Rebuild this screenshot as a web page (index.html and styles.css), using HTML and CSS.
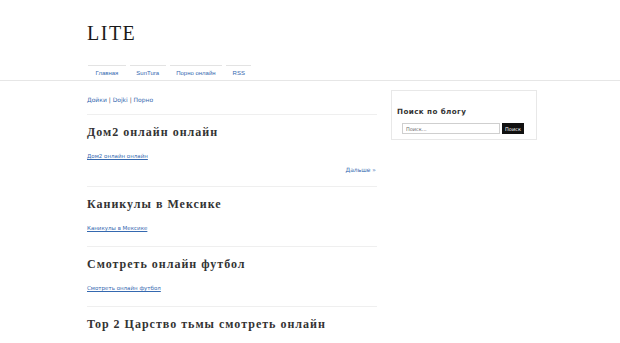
FILE: index.html
```html
<!DOCTYPE html>
<html lang="ru">
<head>
<meta charset="utf-8">
<title>LITE</title>
<link rel="stylesheet" href="styles.css">
</head>
<body>
<header class="site-header">
  <div class="wrap">
    <div class="logo">LITE</div>
    <nav class="nav">
      <a class="tab" href="#">Главная</a>
      <a class="tab" href="#">SunTura</a>
      <a class="tab" href="#">Порно онлайн</a>
      <a class="tab" href="#">RSS</a>
    </nav>
  </div>
</header>
<div class="wrap layout">
  <main class="main">
    <div class="crumbs"><a href="#">Дойки</a> | <a href="#">Dojki</a> | <a href="#">Порно</a></div>
    <article class="post post-more">
      <h2 class="post-title">Дом2 онлайн онлайн</h2>
      <p class="post-link"><a href="#">Дом2 онлайн онлайн</a></p>
      <div class="more"><a href="#">Дальше »</a></div>
    </article>
    <article class="post">
      <h2 class="post-title">Каникулы в Мексике</h2>
      <p class="post-link"><a href="#">Каникулы в Мексике</a></p>
    </article>
    <article class="post">
      <h2 class="post-title">Смотреть онлайн футбол</h2>
      <p class="post-link"><a href="#">Смотреть онлайн футбол</a></p>
    </article>
    <article class="post">
      <h2 class="post-title">Top 2 Царство тьмы смотреть онлайн</h2>
    </article>
  </main>
  <aside class="sidebar">
    <div class="widget">
      <h3 class="widget-title">Поиск по блогу</h3>
      <form class="search">
        <input class="search-input" type="text" placeholder="Поиск...">
        <button class="search-btn" type="button">Поиск</button>
      </form>
    </div>
  </aside>
</div>
</body>
</html>
```
FILE: styles.css
```css
* { box-sizing: border-box; }
html, body { margin: 0; padding: 0; background: #fff; }
body { font-family: "DejaVu Sans", Verdana, sans-serif; color: #333; }
a { color: #3569b0; text-decoration: none; }

.wrap { width: 450px; margin-left: 87px; }

.site-header { border-bottom: 1px solid #e6e6e6; }
.logo {
  font-family: "Liberation Serif", serif;
  font-size: 20px;
  letter-spacing: 1.5px;
  color: #1a1a1a;
  line-height: 20px;
  padding-top: 23px;
  height: 65px;
}
.nav { display: flex; gap: 4px; padding-left: 1px; }
.tab {
  display: block;
  border-top: 1px solid #e3e3e3;
  padding: 0 6.5px;
  height: 15px;
  line-height: 14px;
  font-family: "Liberation Sans", Arial, sans-serif;
  font-size: 6px;
  color: #3569b0;
}
.tab:first-child { padding: 0 7.5px; }

.layout { display: flex; gap: 14px; align-items: flex-start; }
.main { width: 290px; }
.crumbs {
  font-size: 6px;
  line-height: 10px;
  padding-top: 14px;
  padding-bottom: 9px;
  color: #555;
}
.post { border-top: 1px solid #efefef; padding: 9px 0 13px; }
.post-more { padding-bottom: 11px; }
.post-title {
  margin: 0;
  font-family: "Liberation Serif", serif;
  font-weight: bold;
  font-size: 12px;
  line-height: 16px;
  letter-spacing: 1px;
  color: #333;
}
.post-link { margin: 11px 0 0; font-size: 5.5px; line-height: 10px; }
.post-link a { text-decoration: underline; }
.more { margin-top: 4px; text-align: right; font-size: 6px; line-height: 10px; padding-right: 1px; }

.sidebar { width: 146px; margin-top: 9px; }
.widget { border: 1px solid #e8e8e8; padding: 16px 5px 5px 5px; height: 50px; }
.widget-title {
  margin: 0;
  font-size: 7.2px;
  font-weight: bold;
  letter-spacing: 0.4px;
  line-height: 10px;
  color: #333;
}
.search { display: flex; gap: 2px; margin-top: 6px; padding-left: 5px; }
.search-input {
  width: 98px;
  height: 11px;
  border: 1px solid #cfcfcf;
  padding: 0 3px;
  font-size: 5px;
  font-family: "DejaVu Sans", sans-serif;
  color: #555;
  outline: none;
}
.search-input::placeholder { color: #666; }
.search-btn {
  width: 22px;
  height: 11px;
  border: 0;
  background: #111;
  color: #fff;
  font-size: 5px;
  font-family: "DejaVu Sans", sans-serif;
  padding: 0;
}
```
